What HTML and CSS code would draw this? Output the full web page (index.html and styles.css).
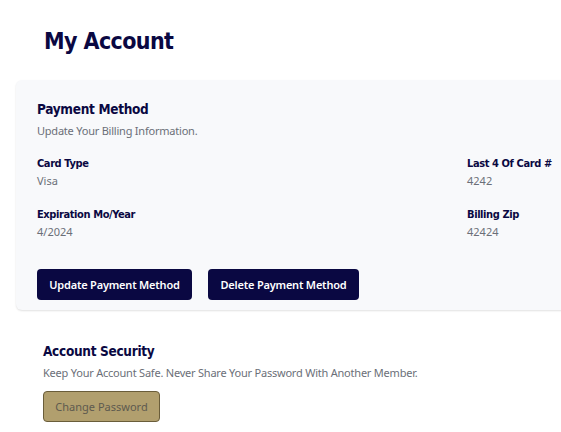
FILE: index.html
```html
<!DOCTYPE html>
<html>
<head>
<meta charset="utf-8">
<link rel="stylesheet" href="styles.css">
</head>
<body>
<div class="page">
  <h1 class="title">My Account</h1>
  <section class="card">
    <h2 class="section-title">Payment Method</h2>
    <p class="section-sub">Update Your Billing Information.</p>
    <div class="info-row">
      <div class="field">
        <div class="label">Card Type</div>
        <div class="value">Visa</div>
      </div>
      <div class="field field-right">
        <div class="label">Last 4 Of Card #</div>
        <div class="value">4242</div>
      </div>
    </div>
    <div class="info-row">
      <div class="field">
        <div class="label">Expiration Mo/Year</div>
        <div class="value">4/2024</div>
      </div>
      <div class="field field-right">
        <div class="label">Billing Zip</div>
        <div class="value">42424</div>
      </div>
    </div>
    <div class="actions">
      <button class="btn btn-dark btn-update">Update Payment Method</button>
      <button class="btn btn-dark btn-delete">Delete Payment Method</button>
    </div>
  </section>
  <section class="security">
    <h2 class="section-title">Account Security</h2>
    <p class="section-sub">Keep Your Account Safe. Never Share Your Password With Another Member.</p>
    <button class="btn btn-gold">Change Password</button>
  </section>
</div>
</body>
</html>
```
FILE: styles.css
```css
html, body {
  margin: 0;
  padding: 0;
  background: #ffffff;
  overflow: hidden;
}
body {
  font-family: "Noto Sans", "Open Sans", sans-serif;
  color: #0a0842;
}
.page {
  padding: 26px 0 0 16px;
  width: 551px;
}
.title {
  font-family: "DejaVu Sans Condensed", "DejaVu Sans", sans-serif;
  font-stretch: condensed;
  font-weight: 700;
  font-size: 23px;
  line-height: 30px;
  letter-spacing: -0.6px;
  margin: 0 0 24px 28px;
  color: #0a0842;
}
.card {
  background: #f8f9fb;
  border-radius: 6px;
  box-shadow: 0 1px 2px rgba(0, 0, 0, 0.12);
  padding: 19px 21px 10px 21px;
  width: 510px;
}
.section-title {
  font-family: "DejaVu Sans Condensed", "DejaVu Sans", sans-serif;
  font-stretch: condensed;
  font-weight: 700;
  font-size: 13.5px;
  line-height: 20px;
  letter-spacing: -0.3px;
  margin: 0;
  color: #0a0842;
}
.section-sub {
  font-size: 11px;
  line-height: 16px;
  letter-spacing: -0.22px;
  color: #6b6f78;
  margin: 4px 0 0 0;
}
.info-row {
  display: flex;
  justify-content: space-between;
  margin-top: 17px;
}
.info-row + .info-row {
  margin-top: 19px;
}
.field {
  display: flex;
  flex-direction: column;
  gap: 2px;
}
.field-right {
  width: 80px;
}
.label {
  font-family: "DejaVu Sans Condensed", "DejaVu Sans", sans-serif;
  font-stretch: condensed;
  font-weight: 700;
  font-size: 11px;
  line-height: 15px;
  letter-spacing: -0.4px;
  white-space: nowrap;
  color: #0a0842;
}
.value {
  font-size: 11px;
  line-height: 15px;
  color: #6b6f78;
}
.actions {
  display: flex;
  gap: 16px;
  margin-top: 30px;
}
.btn {
  font-family: "Noto Sans", "Open Sans", sans-serif;
  font-size: 11px;
  height: 31px;
  border-radius: 4px;
  cursor: pointer;
  padding: 0;
  letter-spacing: -0.2px;
}
.btn-dark {
  background: #0a0842;
  color: #ffffff;
  border: none;
  font-weight: 600;
}
.btn-update {
  width: 155px;
}
.btn-delete {
  width: 151px;
}
.security {
  padding: 31px 0 0 27px;
}
.security .section-sub {
  margin-top: 4px;
}
.btn-gold {
  margin-top: 10px;
  width: 117px;
  height: 31px;
  background: #b19f6e;
  border: 1px solid #6a5d3a;
  color: #5e5a4f;
  font-weight: 400;
  letter-spacing: 0;
}
```
